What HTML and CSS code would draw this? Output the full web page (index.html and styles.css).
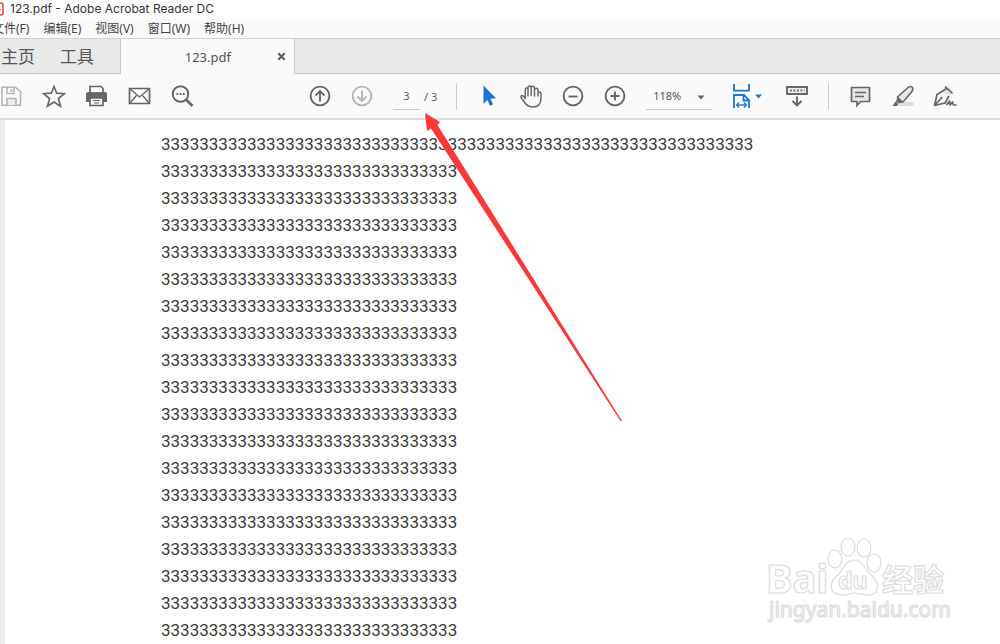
FILE: index.html
```
<!DOCTYPE html>
<html lang="zh-CN">
<head>
<meta charset="utf-8">
<title>123.pdf - Adobe Acrobat Reader DC</title>
<link rel="stylesheet" href="styles.css">
</head>
<body>
<div class="app">
  <header class="titlebar">
    <svg class="app-icon" width="14" height="16" viewBox="0 0 14 16"><rect x="1" y="2" width="12" height="12" rx="2" fill="#fff" stroke="#e8403c" stroke-width="1.5"/><path d="M4 11Q7 7 7 4Q8 9 11 9" fill="none" stroke="#e8403c"/></svg>
    <span>123.pdf - Adobe Acrobat Reader DC</span>
  </header>
  <nav class="menubar">
    <button>文件(F)</button><button>编辑(E)</button><button>视图(V)</button><button>窗口(W)</button><button>帮助(H)</button>
  </nav>
  <div class="tabs">
    <div class="fixed-tabs"><button>主页</button><button>工具</button></div>
    <div class="doc-tab">
      <span class="doc-name">123.pdf</span>
      <button class="close" aria-label="关闭"><svg width="9" height="9" viewBox="0 0 9 9"><path d="M1.3 1.3L7.7 7.7M7.7 1.3L1.3 7.7" stroke="#5c5c5c" stroke-width="2"/></svg></button>
    </div>
  </div>
  <div class="toolbar">
    <div class="group files">
      <button class="tool" aria-label="保存"><svg viewBox="0 0 24 24" fill="none" stroke="#b4b4b4" stroke-width="1.6"><path d="M3 3.300H16.500L21.500 7.500V21.200H3Z"/><path d="M8 3.500V9.500H15V3.500M12.500 5V8"/><path d="M8 21V14.500H17V21" fill="#eee"/></svg></button>
      <button class="tool" aria-label="收藏"><svg viewBox="0 0 24 24" fill="none" stroke="#6a6a6a" stroke-width="1.7"><path d="M12 2.500L14.700 9.200L22.300 9.700L16.400 14.500L18.500 22.200L12 18L5.500 22.200L7.600 14.500L1.700 9.700L9.300 9.200Z"/></svg></button>
      <button class="tool" aria-label="打印"><svg viewBox="0 0 24 24"><path d="M1 10Q1 8 3 8H20Q22 8 22 10V18H1Z" fill="#666"/><path d="M5 9V2.500H16L18 4.500V9Z" fill="#fff" stroke="#666" stroke-width="1.700"/><path d="M4.500 9.500H18.500" stroke="#666" stroke-width="2"/><path d="M5 14H18V21.500H5Z" fill="#f5f5f5" stroke="#666" stroke-width="1.700"/><path d="M8 16.500H15M9 19H14" stroke="#666" stroke-width="1.200"/></svg></button>
      <button class="tool" aria-label="邮件"><svg viewBox="0 0 24 24" fill="none" stroke="#666" stroke-width="1.700"><path d="M1.500 4.500H21.500V19.500H1.500Z"/><path d="M2 5L11.500 13L21 5M2 19L8.500 11.500M21 19L14.500 11.500" stroke-width="1.300"/></svg></button>
      <button class="tool" aria-label="搜索"><svg viewBox="0 0 24 24" fill="none" stroke="#666"><circle cx="9.500" cy="10" r="7.800" stroke-width="1.900"/><path d="M15 15.500L21.500 22" stroke-width="2.700"/><path d="M5.500 10H14" stroke-width="1.800" stroke-dasharray="1.800 1.400"/></svg></button>
    </div>
    <div class="group pager">
      <button class="tool" aria-label="上一页"><svg viewBox="0 0 24 24" fill="none" stroke="#666" stroke-width="1.900"><circle cx="12" cy="12" r="9.400"/><path d="M12 17.500V7M7.500 11.500L12 7L16.500 11.500"/></svg></button>
      <button class="tool" aria-label="下一页"><svg viewBox="0 0 24 24" fill="none" stroke="#b4b4b4" stroke-width="1.900"><circle cx="12" cy="12" r="9.400"/><path d="M12 6.500V17M7.500 12.500L12 17L16.500 12.500"/></svg></button>
    </div>
    <div class="page-count"><input aria-label="页码" value="3"><span>/ 3</span></div>
    <div class="divider"></div>
    <div class="group view">
      <button class="tool" aria-label="选择"><svg viewBox="0 0 24 24"><path d="M6.500 1.500V20L10.500 16L13 21.700L16 20.300L13.500 14.800L19 14.300Z" fill="#1c75d0"/></svg></button>
      <button class="tool" aria-label="手形"><svg viewBox="0 0 24 24" fill="none" stroke="#6a6a6a" stroke-width="1.500" stroke-linejoin="round" stroke-linecap="round"><path d="M6.300 14.500V5.500Q6.300 4 7.700 4Q9 4 9 5.500V12M9 11.500V3.500Q9 2 10.700 2Q12.200 2 12.200 3.500V11.500M12.200 3.500Q12.500 2.300 13.800 2.300Q15.500 2.300 15.500 4V12M15.500 6Q15.800 4.200 17.300 4.200Q19 4.200 19 6V12M19 8.500Q22 7 22 10V14Q22 23 14 23Q9 23 6 19L2 13.500Q1.500 12 3 11.500Q4.500 11.500 6.300 14.500"/></svg></button>
      <button class="tool" aria-label="缩小"><svg viewBox="0 0 24 24" fill="none" stroke="#666" stroke-width="1.900"><circle cx="12" cy="12" r="9.400"/><path d="M7.500 12.500H16.500"/></svg></button>
      <button class="tool" aria-label="放大"><svg viewBox="0 0 24 24" fill="none" stroke="#666" stroke-width="1.900"><circle cx="12" cy="12" r="9.400"/><path d="M7.500 12H16.500M12 7.500V16.500"/></svg></button>
    </div>
    <div class="zoom">
      <select aria-label="缩放"><option>118%</option></select>
      <svg class="zoom-caret" width="8" height="5" viewBox="0 0 8 5"><path d="M0.500 0.500H7.500L4 4.500Z" fill="#666"/></svg>
    </div>
    <button class="tool fit" aria-label="适合宽度"><svg class="fit-icon" viewBox="0 0 32 26" fill="none" stroke="#1c75d0" stroke-width="1.800"><path d="M2 1V7.700H17V1M2 25V12H12L17 17V25M11.500 12V17.500H17"/><path d="M4.500 22H14.500M7 19.500L4.500 22L7 24.500M12 19.500L14.500 22L12 24.500" stroke-width="1.300"/><path d="M23 11.500H30L26.500 15.500Z" fill="#1c75d0" stroke="none"/></svg></button>
    <button class="tool" aria-label="阅读模式"><svg viewBox="0 0 24 24" fill="none" stroke="#666" stroke-width="1.900"><path d="M2 3H22V10H2Z" fill="#eee"/><path d="M5 6.500H19.500" stroke-dasharray="1.800 1.700"/><path d="M12 12.500V21M7.500 17L12 21.500L16.500 17"/></svg></button>
    <div class="divider"></div>
    <div class="group notes">
      <button class="tool" aria-label="注释"><svg viewBox="0 0 24 24" fill="#e6e6e6" stroke="#666" stroke-width="1.700"><path d="M2.500 3.500H20.500V17.500H11.500L8 21.500V17.500H2.500Z"/><path d="M6 8.500H17M6 12.500H15" stroke-width="1.300"/></svg></button>
      <button class="tool" aria-label="高亮"><svg viewBox="0 0 24 24"><path d="M11 18H22.500V22H7Z" fill="#dcdcdc"/><path d="M6.500 13L17 3.500Q19.500 1.500 21.500 3.500Q22.500 5.500 20.500 8L12 18L8 18Z" fill="#e8e8e8" stroke="#666" stroke-width="1.600"/><path d="M6.500 12.500L12 17.500L8.500 19.500L5 18Z" fill="#666"/><path d="M4.500 17.500L7.500 20L6 22H1.500Z" fill="#666"/></svg></button>
      <button class="tool" aria-label="签名"><svg viewBox="0 0 24 24" fill="none" stroke="#666" stroke-width="1.700" stroke-linejoin="round"><path d="M13 2L20 6L17 12L9 8Z" fill="#e2e2e2" stroke="none"/><path d="M12 2.500L19.500 9.500M10.500 6.500L4 10.500L1.500 21.500L12 19L16 12M10.500 6.500L13.500 4.500M1.500 21.500L7.500 15"/><circle cx="8.500" cy="14" r="1.200" fill="#666" stroke="none"/><path d="M13.500 21L16.500 17L17 21L19.500 18L20.500 21H23.500" stroke-width="1.700"/></svg></button>
    </div>
  </div>
  <main class="document">
    <div class="page">
      <p>33333333333333333333333333333333333333333333333333333333333333</p>
      <p>3333333333333333333333333333333</p>
      <p>3333333333333333333333333333333</p>
      <p>3333333333333333333333333333333</p>
      <p>3333333333333333333333333333333</p>
      <p>3333333333333333333333333333333</p>
      <p>3333333333333333333333333333333</p>
      <p>3333333333333333333333333333333</p>
      <p>3333333333333333333333333333333</p>
      <p>3333333333333333333333333333333</p>
      <p>3333333333333333333333333333333</p>
      <p>3333333333333333333333333333333</p>
      <p>3333333333333333333333333333333</p>
      <p>3333333333333333333333333333333</p>
      <p>3333333333333333333333333333333</p>
      <p>3333333333333333333333333333333</p>
      <p>3333333333333333333333333333333</p>
      <p>3333333333333333333333333333333</p>
      <p>3333333333333333333333333333333</p>
    </div>
  </main>
  <svg class="arrow" width="200" height="312" viewBox="0 0 200 312"><path d="M0 3L15 12L12.500 15L197 311L195.500 311L6 18.500L2 21Z" fill="#fb3838"/></svg>
  <svg class="watermark" width="200" height="92" viewBox="0 0 200 92">
    <g fill="#fff" stroke="#dcdcdc" stroke-width="1.200">
      <ellipse cx="74" cy="21" rx="7" ry="9"/><ellipse cx="87" cy="9" rx="7" ry="9"/><ellipse cx="103" cy="10" rx="7" ry="9"/><ellipse cx="113" cy="25" rx="7" ry="9"/>
      <path d="M93 22C84 22 83 31 77 37C67 45 68 56 80 57C86 58 88 55 93 55C99 55 102 58 109 57C119 55 119 45 110 37C103 31 102 22 93 22Z"/>
      <text class="wm-bai" x="5" y="55">Bai</text>
      <text class="wm-du" x="77" y="51">du</text>
      <text class="wm-cn" x="121" y="53">经验</text>
      <text class="wm-url" x="8" y="79">jingyan.baidu.com</text>
    </g>
  </svg>
</div>
</body>
</html>
```
FILE: styles.css
```
* { box-sizing: border-box; }
body {
  margin: 0;
  overflow: hidden;
  background: #fff;
  color: #555;
  font-family: "Noto Sans", "Noto Sans CJK SC", sans-serif;
}
button, input, select {
  margin: 0;
  padding: 0;
  border: 0;
  background: none;
  color: inherit;
  font: inherit;
}
svg { display: block; }
.app {
  position: relative;
  display: flex;
  flex-direction: column;
  min-height: 100vh;
  overflow: hidden;
}
.titlebar {
  display: flex;
  align-items: center;
  gap: 6px;
  height: 19px;
  margin-left: -10px;
  padding-bottom: 2px;
  color: #333;
  font-family: Inter, sans-serif;
  font-size: 12px;
  line-height: 16px;
}
.menubar {
  display: flex;
  gap: 14px;
  height: 20px;
  border-bottom: 1px solid #d2d2d2;
  background: #fafafa;
  font-size: 12px;
  line-height: 18px;
  white-space: nowrap;
}
.menubar button { color: #444; }
.menubar button:first-child { margin-left: -8px; }
.tabs {
  display: flex;
  height: 35px;
  background: #e9e9e9;
}
.fixed-tabs {
  display: flex;
  gap: 25px;
  width: 121px;
  padding: 1px 0 0 1px;
  border-right: 1px solid #c8c8c8;
  border-bottom: 1px solid #c8c8c8;
  font-size: 17px;
  line-height: 24px;
}
.doc-tab {
  display: flex;
  align-items: center;
  justify-content: flex-end;
  gap: 46px;
  width: 173px;
  padding-right: 8px;
  background: #fafafa;
  font-size: 13px;
}
.tabs::after {
  content: "";
  flex: 1;
  border-left: 1px solid #c8c8c8;
  border-bottom: 1px solid #c8c8c8;
}
.toolbar {
  display: flex;
  align-items: center;
  height: 46px;
  border-bottom: 2px solid #dcdcdc;
  background: #fafafa;
}
.tool { flex: none; width: 24px; height: 24px; }
.tool svg { width: 24px; height: 24px; }
.group { display: flex; gap: 18px; }
.files { gap: 19px; margin-left: -1px; }
.pager { margin-left: 113px; }
.page-count {
  display: flex;
  align-items: center;
  gap: 4px;
  margin-left: 19px;
  font-family: "Open Sans", sans-serif;
  font-size: 11px;
}
.page-count input {
  width: 27px;
  height: 27px;
  border-bottom: 1px solid #c8c8c8;
  text-align: center;
}
.divider { width: 1px; height: 27px; margin: 0 20px 0 19px; background: #ccc; }
.zoom { position: relative; margin-left: 19px; }
.zoom select {
  appearance: none;
  width: 66px;
  height: 27px;
  padding-left: 7px;
  border-bottom: 1px solid #c8c8c8;
  border-radius: 0;
  font-size: 11px;
}
.zoom-caret { position: absolute; right: 7px; top: 12px; pointer-events: none; }
.fit { width: 32px; height: 26px; margin: 0 21px 0 20px; }
.fit .fit-icon { width: 32px; height: 26px; }
.document {
  flex: 1;
  border-left: 5px solid #ececec;
  background: #fff;
}
.page {
  padding: 11px 0 0 156px;
  color: #3a3a3a;
  font-family: Roboto, sans-serif;
  font-size: 17px;
  line-height: 27px;
}
.page p { margin: 0; }
.arrow { position: absolute; left: 425px; top: 110px; pointer-events: none; }
.watermark { position: absolute; right: 39px; bottom: 14px; pointer-events: none; }
.wm-bai { font: bold 40px "Noto Sans", sans-serif; }
.wm-du { font: bold 23px "Noto Sans", sans-serif; }
.wm-cn { font: bold 31px "Noto Sans CJK SC", sans-serif; }
.wm-url { font: 21px "Noto Sans", sans-serif; }
```
